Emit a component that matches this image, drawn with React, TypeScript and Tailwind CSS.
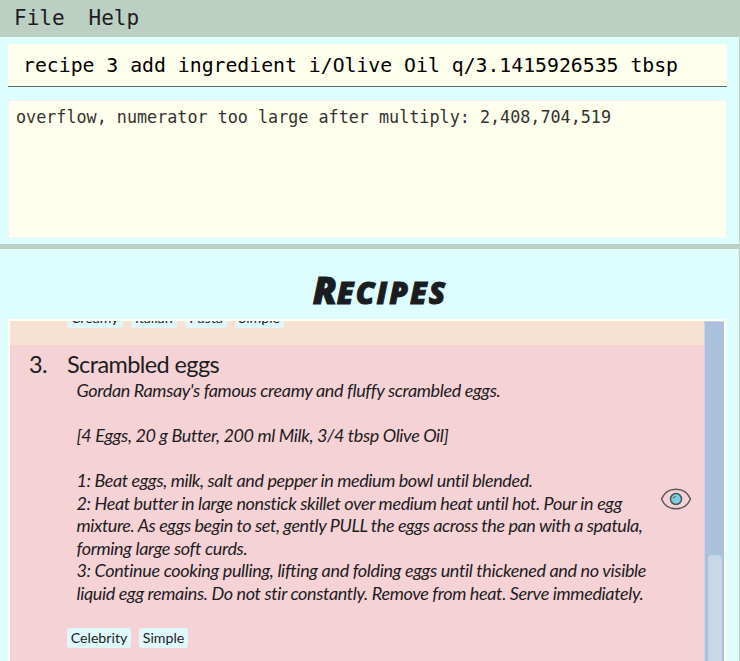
const bodyLines = [
  { text: "Gordan Ramsay's famous creamy and fluffy scrambled eggs.", spacing: 'tracking-[-0.355px]' },
  { text: '', spacing: '' },
  { text: '[4 Eggs, 20 g Butter, 200 ml Milk, 3/4 tbsp Olive Oil]', spacing: 'tracking-[-0.38px]' },
  { text: '', spacing: '' },
  { text: '1: Beat eggs, milk, salt and pepper in medium bowl until blended.', spacing: 'tracking-[-0.395px]' },
  { text: '2: Heat butter in large nonstick skillet over medium heat until hot. Pour in egg', spacing: 'tracking-[-0.37px]' },
  { text: 'mixture. As eggs begin to set, gently PULL the eggs across the pan with a spatula,', spacing: 'tracking-[-0.42px]' },
  { text: 'forming large soft curds.', spacing: 'tracking-[-0.35px]' },
  { text: '3: Continue cooking pulling, lifting and folding eggs until thickened and no visible', spacing: 'tracking-[-0.345px]' },
  { text: 'liquid egg remains. Do not stir constantly. Remove from heat. Serve immediately.', spacing: 'tracking-[-0.36px]' },
];

function Tag({ name, width }: { name: string; width: string }) {
  return (
    <span className={`flex h-5 shrink-0 items-center justify-center rounded-[3px] bg-[#e0f8fa] text-[14.2px] leading-[20px] whitespace-nowrap ${width}`}>
      {name}
    </span>
  );
}

function EyeIcon() {
  return (
    <svg className="h-[24px] w-[32px] shrink-0" viewBox="0 0 32 24" fill="none">
      <path d="M1.500 12C4 6 9 2.200 16 2.200S28 6 30.500 12C28 18 23 21.800 16 21.800S4 18 1.500 12Z" stroke="#55565a" strokeWidth="1.4" strokeLinejoin="round" />
      <circle cx="16" cy="12" r="5.5" fill="#7dcde3" stroke="#4b565c" strokeWidth="1.5" />
      <path d="M12.8 12.2c0-2 1.500-3.200 3.500-3.200-1 .5-1 1.300-1.500 1.500s-1.500.5-2 1.700Z" fill="#4b565c" />
    </svg>
  );
}

export default function App() {
  return (
    <div className="flex h-[661px] w-[740px] flex-col overflow-hidden bg-[#ddfdff] text-[#1d1d1f]">
      <nav className="flex h-[37px] shrink-0 gap-[24px] bg-[#bccfc3] pl-[14px] font-['DejaVu_Sans_Mono',monospace] text-[21px] leading-[36px]">
        <span>File</span>
        <span>Help</span>
      </nav>
      <div className="flex min-h-0 grow flex-col border-r border-[#bccfc3]">
        <div className="mt-[7px] ml-2 h-[43px] w-[719px] shrink-0 border-b border-[#666663] bg-[#ffffed] pt-px pl-[15px] font-['DejaVu_Sans_Mono',monospace] text-[19.8px] leading-[42px] whitespace-pre text-black">
          recipe 3 add ingredient i/Olive Oil q/3.1415926535 tbsp
        </div>
        <div className="mt-[13px] ml-2 h-[138px] w-[719px] shrink-0 rounded-[2px] border border-[#f3f3ef] bg-[#ffffed] pt-[5px] pl-[7px] font-['DejaVu_Sans_Mono',monospace] text-[16.75px] leading-[22px] whitespace-pre text-[#333330]">
          overflow, numerator too large after multiply: 2,408,704,519
        </div>
        <div className="mt-[6px] h-[5px] shrink-0 bg-[#bccfc3]" />
        <h1 className="flex h-[70px] shrink-0 items-baseline justify-center pt-[19px] pl-[21px] font-['Open_Sans',sans-serif] text-[37px] leading-[44px] font-extrabold text-[#191d1f] italic [-webkit-text-stroke:1px_#191d1f] [stroke-linejoin:round]">
          <span>R</span>
          <span className="text-[30px] tracking-[2px]">ECIPES</span>
        </h1>
        <main className="ml-2 flex min-h-0 w-[718px] grow border-t-2 border-r-2 border-l-2 border-[#ffffed] font-[Lato,sans-serif]">
          <div className="flex min-w-0 grow flex-col">
            <div className="flex h-[24px] shrink-0 items-start gap-2 overflow-hidden bg-[#f6e1d3] pl-[57px]">
              <div className="-mt-[13px] flex gap-2">
                <Tag name="Creamy" width="w-[55.5px]" />
                <Tag name="Italian" width="w-[46.5px]" />
                <Tag name="Pasta" width="w-[42px]" />
                <Tag name="Simple" width="w-[48.5px]" />
              </div>
            </div>
            <article className="flex grow bg-[#f5d2d5]">
              <div className="w-[640px] shrink-0 pl-[19px]">
                <h2 className="flex h-[35px] pt-[4px] text-[23.5px] leading-[30px] tracking-[-0.6px]">
                  <span className="w-[38px]">3.</span>
                  <span>Scrambled eggs</span>
                </h2>
                <div className="pl-[47.5px] text-[18px] italic">
                  {bodyLines.map((line, i) => (
                    <p key={i} className={`h-[22.5px] leading-[20px] whitespace-pre ${line.spacing}`}>{line.text}</p>
                  ))}
                </div>
                <div className="mt-[23px] flex gap-2 pl-[38px]">
                  <Tag name="Celebrity" width="w-[64px]" />
                  <Tag name="Simple" width="w-[49px]" />
                </div>
              </div>
              <div className="pt-[142px] pl-[10px]">
                <EyeIcon />
              </div>
            </article>
          </div>
          <div className="flex w-[20px] shrink-0 flex-col border-t border-l border-[#c7d7e3] bg-[#abc1db] pt-[233px] pl-[3px]">
            <div className="w-[14px] grow rounded-t-[4px] border-x border-t border-[#c1d3e6] bg-[#c9d8e9]" />
          </div>
        </main>
      </div>
    </div>
  );
}
